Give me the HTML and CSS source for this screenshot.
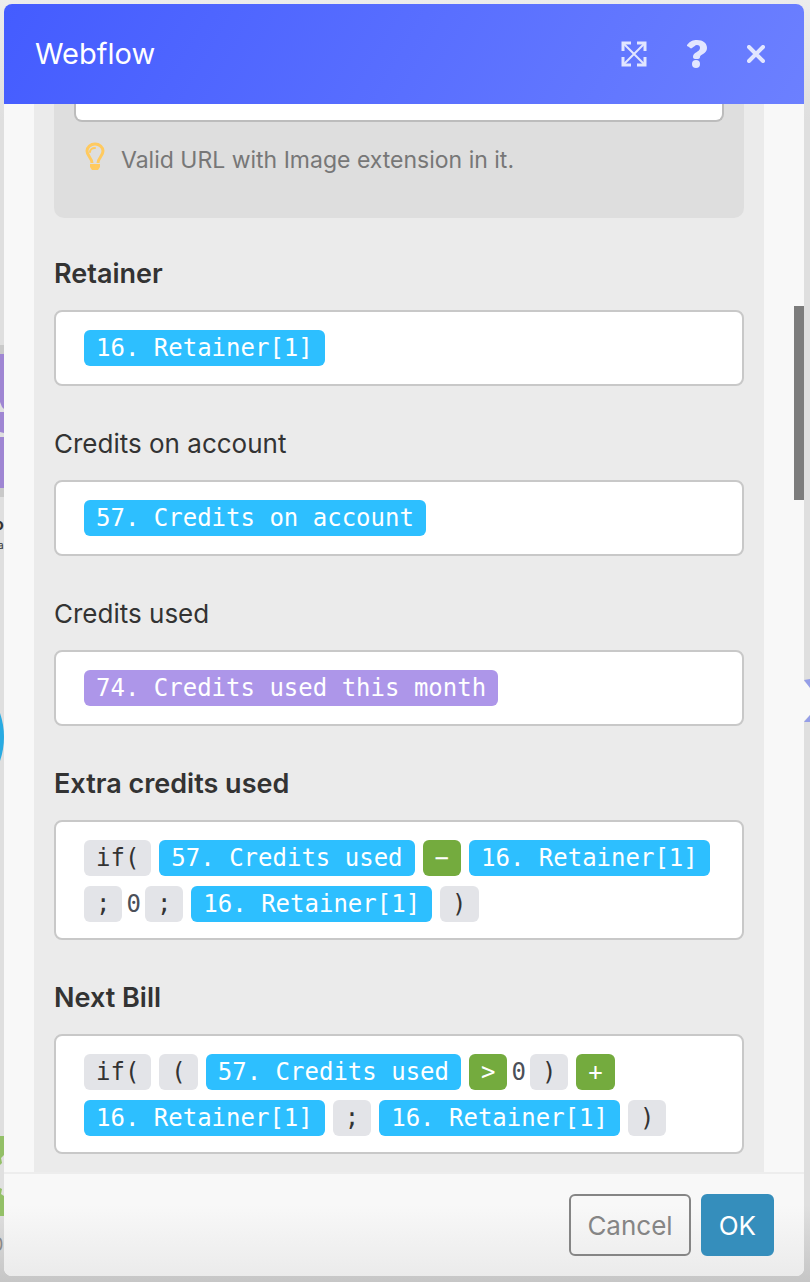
FILE: index.html
```html
<!doctype html>
<html lang="en">
  <head>
    <meta charset="UTF-8" />
    <meta name="viewport" content="width=device-width, initial-scale=1.0" />
    <title>Webflow</title>
    <link rel="stylesheet" href="styles.css">
  </head>
  <body>
    <!-- Scenario canvas behind the panel -->
    <div class="canvas" aria-hidden="true">
      <svg class="node node-purple" width="4" height="160" viewBox="0 0 4 160">
        <path fill="#c9c9c9" d="M0 0h4v9H0zM0 143h4v9H0z" />
        <path fill="#9f86d3" d="M0 9h4v134H0z" />
        <path fill="#e0e0e0" d="M0 57l2 5 2 2v3H0zM0 87l4 1v4H0z" />
      </svg>
      <span class="node-title">o</span>
      <span class="node-subtitle">a</span>
      <svg class="node node-blue" width="4" height="48" viewBox="0 0 4 48">
        <path fill="#29abe2" d="M0 0Q8 24 0 48z" />
      </svg>
      <svg class="node node-green" width="4" height="80" viewBox="0 0 4 80">
        <path fill="#93c067" d="M0 0h4v80H0z" />
        <path fill="#e0e0e0" d="M4 19l-3 3 1 5-2 2v23l2 1-1 5 3 2z" />
      </svg>
      <span class="node-count">0</span>
      <svg class="node node-right" width="6" height="44" viewBox="0 0 6 44">
        <path fill="#f8f8f8" d="M0 2L6 8v28L0 42z" />
        <path fill="#959ee8" d="M0 1l6-1v9zM0 43l6-7v7z" />
      </svg>
    </div>

    <div class="panel" role="dialog" aria-labelledby="panelTitle">
      <header class="panel-header">
        <h1 id="panelTitle">Webflow</h1>
        <div class="panel-actions">
          <button type="button" class="icon-btn" aria-label="Expand">
            <svg width="26" height="26" viewBox="0 0 26 26" fill="none" stroke="currentColor">
              <path stroke-width="2" d="M3 3l20 20M23 3L3 23" />
              <path stroke-width="3" d="M10 2H2v8M16 2h8v8M10 24H2v-8M16 24h8v-8" />
            </svg>
          </button>
          <button type="button" class="icon-btn" aria-label="Help">
            <svg width="20" height="30" viewBox="0 0 20 30">
              <path fill="currentColor" d="M0 6C3 2 6 1 10 1c6 0 10 3 10 8 0 6-7 6-7 9 0 1-1 2-2 2H8c-1 0-2-1-2-2 0-5 7-5 7-9 0-2-1-3-3-3S7 8 5 9c-1 1-2 0-3-1L0 7z" />
              <circle cx="9" cy="25" r="4" fill="currentColor" />
            </svg>
          </button>
          <button type="button" class="icon-btn" aria-label="Close">
            <svg width="18" height="18" viewBox="0 0 18 18">
              <path fill="none" stroke="currentColor" stroke-width="4" stroke-linecap="round" d="M2 2l14 14M16 2L2 16" />
            </svg>
          </button>
        </div>
      </header>

      <form class="panel-body" id="webflowForm">
        <div class="fields">
          <div class="nested">
            <input type="text" class="url-input" aria-label="URL" aria-describedby="urlHint" />
            <p class="hint" id="urlHint">
              <svg width="20" height="28" viewBox="0 0 20 28" fill="none" stroke="#ffca5f">
                <path stroke-width="3" d="M7 21C7 16 2 14 2 9a8 7 0 0 1 16 0c0 5-5 7-5 12" />
                <path stroke-width="2" stroke-linecap="round" d="M5 10c0-2 2-4 5-4" />
                <path fill="#ffca5f" stroke="none" d="M5 22h10v3l-2 3H7l-2-3z" />
              </svg>
              Valid URL with Image extension in it.
            </p>
          </div>

          <div class="field">
            <label class="bold" id="retainerLabel">Retainer</label>
            <div class="editor" contenteditable="true" role="textbox" aria-labelledby="retainerLabel">
              <span class="chip blue">16. Retainer[1]</span>
            </div>
          </div>

          <div class="field">
            <label id="accountLabel">Credits on account</label>
            <div class="editor" contenteditable="true" role="textbox" aria-labelledby="accountLabel">
              <span class="chip blue">57. Credits on account</span>
            </div>
          </div>

          <div class="field">
            <label id="usedLabel">Credits used</label>
            <div class="editor" contenteditable="true" role="textbox" aria-labelledby="usedLabel">
              <span class="chip purple">74. Credits used this month</span>
            </div>
          </div>

          <div class="field">
            <label class="bold" id="extraLabel">Extra credits used</label>
            <div class="editor" contenteditable="true" role="textbox" aria-labelledby="extraLabel">
              <span class="chip">if(</span>
              <span class="chip blue">57. Credits used</span>
              <span class="chip operator">−</span>
              <span class="chip blue">16. Retainer[1]</span>
              <span class="chip">;</span>
              <span>0</span>
              <span class="chip">;</span>
              <span class="chip blue">16. Retainer[1]</span>
              <span class="chip">)</span>
            </div>
          </div>

          <div class="field">
            <label class="bold" id="billLabel">Next Bill</label>
            <div class="editor" contenteditable="true" role="textbox" aria-labelledby="billLabel">
              <span class="chip">if(</span>
              <span class="chip">(</span>
              <span class="chip blue">57. Credits used</span>
              <span class="chip operator">&gt;</span>
              <span>0</span>
              <span class="chip">)</span>
              <span class="chip operator">+</span>
              <span class="chip blue">16. Retainer[1]</span>
              <span class="chip">;</span>
              <span class="chip blue">16. Retainer[1]</span>
              <span class="chip">)</span>
            </div>
          </div>
        </div>
        <div class="scroll-thumb"></div>
      </form>

      <footer class="panel-footer">
        <button type="button" class="btn">Cancel</button>
        <button type="submit" class="btn btn-primary" form="webflowForm">OK</button>
      </footer>
    </div>
  </body>
</html>
```
FILE: styles.css
```css
* {
  box-sizing: border-box;
  margin: 0;
  padding: 0;
}

body {
  height: 100vh;
  padding: 4px 6px 6px 4px;
  background: linear-gradient(#ececec, #dfdfdf 120px, #dfdfdf 94%, #c6c6c6);
  font-family: Inter, "Liberation Sans", sans-serif;
  color: #333;
  overflow: hidden;
}

/* Canvas */
.canvas {
  position: absolute;
  inset: 0;
  overflow: hidden;
}

.node,
.node-title,
.node-subtitle,
.node-count {
  position: absolute;
}

.node-purple {
  top: 345px;
  left: 0;
}

.node-blue {
  top: 713px;
  left: 0;
}

.node-green {
  top: 1136px;
  left: 0;
}

.node-right {
  top: 679px;
  right: 0;
}

.node-title {
  top: 514px;
  left: -6px;
  font-size: 16px;
  font-weight: 700;
}

.node-subtitle {
  top: 539px;
  left: -2px;
  font-size: 10px;
}

.node-count {
  top: 1234px;
  left: -8px;
  font-size: 18px;
  color: #888;
}

/* Panel */
.panel {
  position: relative;
  display: flex;
  flex-direction: column;
  height: 100%;
  background-color: #f8f8f8;
  border-radius: 8px;
  overflow: hidden;
}

.panel-header {
  display: flex;
  flex-shrink: 0;
  justify-content: space-between;
  align-items: center;
  height: 100px;
  padding: 0 39px 0 31px;
  background: linear-gradient(120deg, #445cff, #6c80ff);
  color: #fff;
}

.panel-header h1 {
  font-size: 29px;
  font-weight: 400;
  line-height: 40px;
}

.panel-actions {
  display: flex;
  align-items: center;
  gap: 40px;
}

.icon-btn {
  display: flex;
  border: none;
  background: none;
  color: #e2e6ff;
  cursor: pointer;
}

.panel-body {
  position: relative;
  flex: 1;
  min-height: 0;
  padding: 0 40px 0 30px;
  overflow: hidden;
}

.fields {
  min-height: 100%;
  padding: 0 20px 18px;
  background-color: #ebebeb;
}

.nested {
  height: 114px;
  margin-bottom: 40px;
  padding: 0 20px;
  background-color: #dedede;
  border-radius: 0 0 10px 10px;
}

.url-input {
  display: block;
  width: 100%;
  height: 18px;
  border: 2px solid #bcbcbc;
  border-top: none;
  border-radius: 0 0 8px 8px;
  background-color: #fff;
}

.hint {
  display: flex;
  gap: 16px;
  margin-top: 20px;
  padding-left: 11px;
  font-size: 23px;
  line-height: 36px;
  color: #777;
}

.field + .field {
  margin-top: 42px;
}

.field label {
  display: block;
  margin-bottom: 20px;
  font-size: 26px;
  line-height: 32px;
}

.field .bold {
  font-size: 27px;
  font-weight: 600;
}

.editor {
  display: flex;
  flex-wrap: wrap;
  align-content: flex-start;
  row-gap: 10px;
  min-height: 76px;
  padding: 18px 24px 16px;
  border: 2px solid #c8c8c8;
  border-radius: 8px;
  background-color: #fff;
  font-family: "DejaVu Sans Mono", monospace;
  font-size: 24px;
  line-height: 36px;
  color: #4b5059;
  outline: none;
}

.chip {
  margin: 0 4px;
  padding: 0 12px;
  border-radius: 6px;
  background-color: #e3e4e8;
  color: #333;
}

.chip.blue {
  background-color: #2dbfff;
  color: #fff;
}

.chip.purple {
  background-color: #ad96e9;
  color: #fff;
}

.chip.operator {
  background-color: #74ab3e;
  color: #fff;
}

.scroll-thumb {
  position: absolute;
  top: 202px;
  right: 0;
  width: 10px;
  height: 194px;
  background-color: #7c7c7c;
}

.panel-footer {
  display: flex;
  flex-shrink: 0;
  justify-content: flex-end;
  gap: 10px;
  padding: 20px 30px;
  border-top: 2px solid #ededed;
  background: linear-gradient(#f8f8f8 30%, #ebebeb);
}

.btn {
  height: 62px;
  padding: 0 16px;
  border: 2px solid #858585;
  border-radius: 6px;
  background: none;
  color: #858585;
  font-family: inherit;
  font-size: 26px;
  cursor: pointer;
}

.btn-primary {
  border-color: #358ebc;
  background-color: #358ebc;
  color: #fff;
}
```
